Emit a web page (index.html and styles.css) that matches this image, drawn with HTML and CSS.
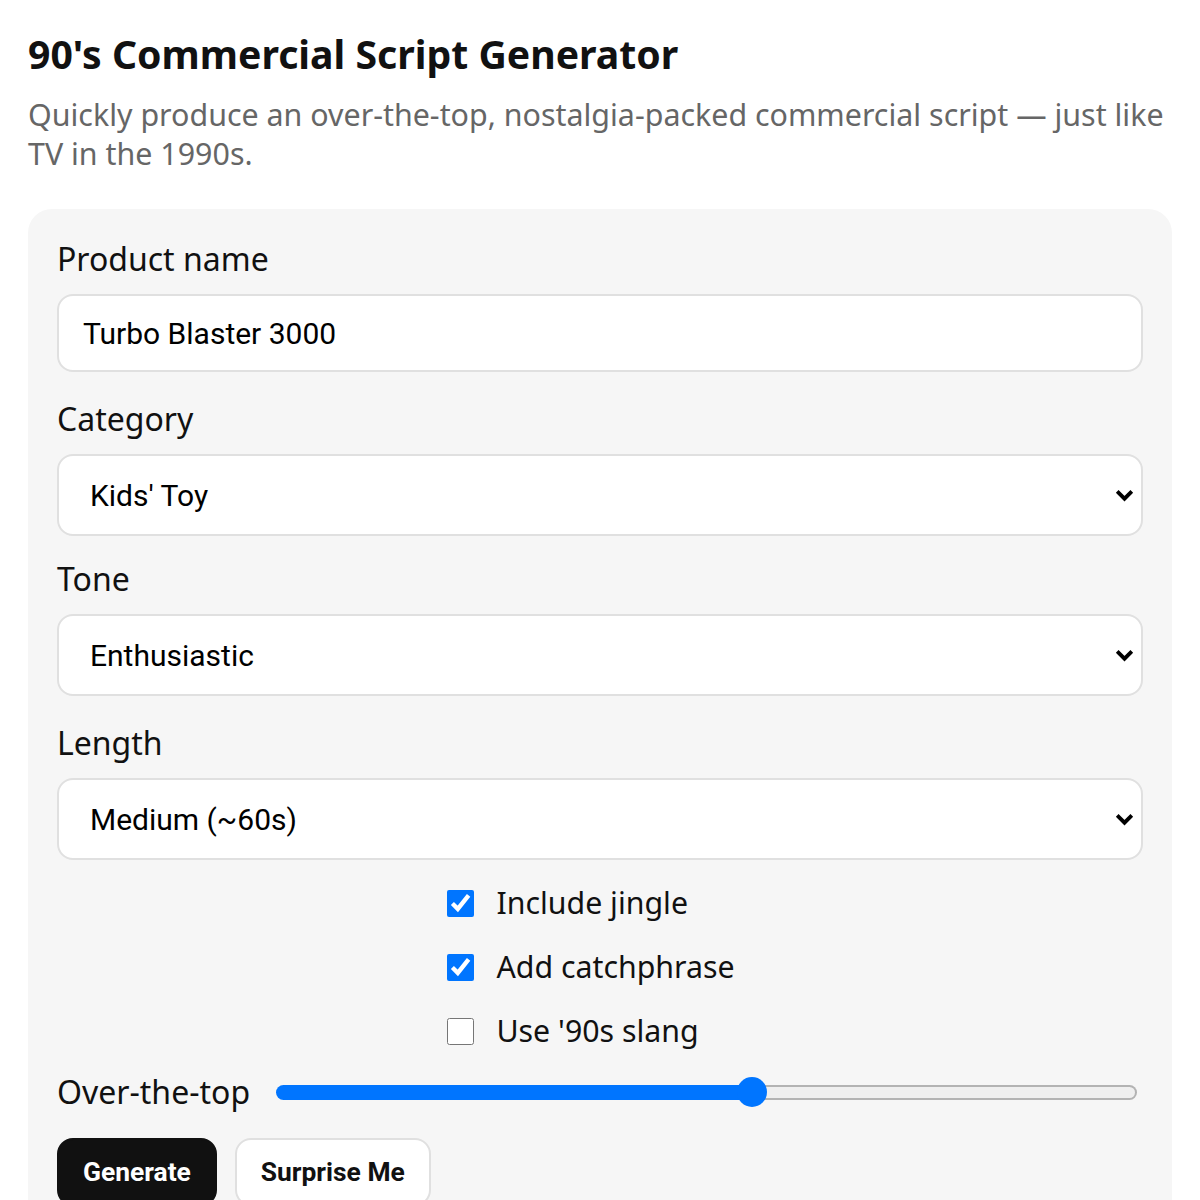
FILE: index.html
```html
<!DOCTYPE html>
<html lang="en">
<head>
<meta charset="utf-8">
<title>90's Commercial Script Generator</title>
<link rel="stylesheet" href="styles.css">
</head>
<body>
<main class="page">
  <h1 class="title">90's Commercial Script Generator</h1>
  <p class="subtitle">Quickly produce an over-the-top, nostalgia-packed commercial script — just like TV in the 1990s.</p>
  <form class="card">
    <div class="field">
      <label class="field-label" for="product">Product name</label>
      <input class="text-input" id="product" type="text" value="Turbo Blaster 3000">
    </div>
    <div class="field">
      <label class="field-label" for="category">Category</label>
      <select class="select" id="category">
        <option>Kids' Toy</option>
      </select>
    </div>
    <div class="field field-tight">
      <label class="field-label" for="tone">Tone</label>
      <select class="select" id="tone">
        <option>Enthusiastic</option>
      </select>
    </div>
    <div class="field">
      <label class="field-label" for="length">Length</label>
      <select class="select" id="length">
        <option>Medium (~60s)</option>
      </select>
    </div>
    <div class="checks">
      <label class="check"><input type="checkbox" checked><span>Include jingle</span></label>
      <label class="check"><input type="checkbox" checked><span>Add catchphrase</span></label>
      <label class="check"><input type="checkbox"><span>Use '90s slang</span></label>
    </div>
    <div class="slider-row">
      <label class="field-label" for="ott">Over-the-top</label>
      <input class="range" id="ott" type="range" min="1" max="10" value="6" style="--p: 55.3%">
    </div>
    <div class="actions">
      <button type="button" class="btn btn-primary">Generate</button>
      <button type="button" class="btn btn-secondary">Surprise Me</button>
    </div>
  </form>
</main>
</body>
</html>
```
FILE: styles.css
```css
* { box-sizing: border-box; }

html, body {
  margin: 0;
  padding: 0;
  background: #ffffff;
}

body {
  font-family: "Noto Sans", "Open Sans", sans-serif;
  color: #111111;
}

.page {
  padding: 30px 28px 0;
}

.title {
  margin: 0;
  font-size: 39.2px;
  line-height: 48px;
  font-weight: 700;
  color: #111111;
}

.subtitle {
  margin: 17px 0 0;
  font-size: 30.4px;
  line-height: 39px;
  color: #666666;
}

.card {
  margin-top: 36px;
  background: #f6f6f6;
  border-radius: 24px;
  padding: 31px 29px 40px;
  display: flex;
  flex-direction: column;
}

.field {
  display: flex;
  flex-direction: column;
}

.field + .field {
  margin-top: 28px;
}

.field.field-tight {
  margin-top: 24px;
}

.field-label {
  font-size: 32px;
  line-height: 38px;
  color: #111111;
  margin-bottom: 16px;
}

.text-input,
.select {
  font-family: Roboto, "Noto Sans", sans-serif;
  font-size: 30px;
  color: #000000;
  background: #ffffff;
  border: 2px solid #e0e0e0;
  border-radius: 16px;
  width: 100%;
  margin: 0;
}

.text-input {
  height: 78px;
  padding: 0 24px;
}

.select {
  height: 82px;
  padding: 0 60px 0 31px;
  appearance: none;
  -webkit-appearance: none;
  background-image: url("data:image/svg+xml,%3Csvg xmlns='http://www.w3.org/2000/svg' width='19' height='13' viewBox='0 0 19 13'%3E%3Cpath d='M2.2 2.4 L9.5 9.7 L16.8 2.4' fill='none' stroke='%23000' stroke-width='3.8'/%3E%3C/svg%3E");
  background-repeat: no-repeat;
  background-position: right 7px center;
  background-size: 19px 13px;
}

.checks {
  margin-top: 25px;
  align-self: center;
  margin-right: 18px;
  display: flex;
  flex-direction: column;
  gap: 28px;
}

.check {
  display: flex;
  align-items: center;
  gap: 22px;
  height: 36px;
  font-size: 30.3px;
  line-height: 36px;
  color: #111111;
}

.check input {
  width: 27px;
  height: 27px;
  margin: 0;
  accent-color: #0075ff;
}

.slider-row {
  margin-top: 24px;
  display: flex;
  align-items: center;
  gap: 26px;
  height: 38px;
}

.slider-row .field-label {
  margin-bottom: 0;
  white-space: nowrap;
}

.range {
  flex: 1;
  margin: 0 6px 0 0;
  height: 32px;
  background: transparent;
  -webkit-appearance: none;
  appearance: none;
}

.range::-webkit-slider-runnable-track {
  height: 15px;
  border-radius: 8px;
  border: 2px solid transparent;
  background:
    linear-gradient(to right, #0075ff var(--p), transparent var(--p)) border-box,
    linear-gradient(#efefef, #efefef) padding-box,
    linear-gradient(#b3b3b3, #b3b3b3) border-box;
  background-origin: border-box;
}

.range::-webkit-slider-thumb {
  -webkit-appearance: none;
  appearance: none;
  width: 30px;
  height: 30px;
  border-radius: 50%;
  background: #0075ff;
  border: none;
  margin-top: -9.5px;
}

.actions {
  margin-top: 27px;
  display: flex;
  gap: 18px;
}

.btn {
  font-family: Roboto, "Noto Sans", sans-serif;
  font-size: 26.4px;
  font-weight: 700;
  height: 68px;
  padding: 0 24px;
  border-radius: 16px;
  border: 2px solid #e0e0e0;
  cursor: pointer;
}

.btn-primary {
  background: #111111;
  border-color: #111111;
  color: #ffffff;
}

.btn-secondary {
  background: #ffffff;
  color: #111111;
}
```
